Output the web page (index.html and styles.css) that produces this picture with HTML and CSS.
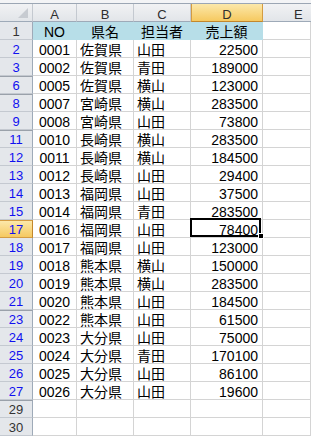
FILE: index.html
```html
<!DOCTYPE html>
<html lang="ja">
<head>
  <meta charset="UTF-8" />
  <title>売上一覧</title>
  <link rel="stylesheet" href="styles.css">
</head>
<body>
  <div class="topbar"></div>

  <div class="sheet">
    <div class="row head">
      <div class="corner"></div>
      <div class="colh">A</div>
      <div class="colh">B</div>
      <div class="colh">C</div>
      <div class="colh active">D</div>
      <div class="colh last">E</div>
    </div>

    <div class="row title">
      <div class="rh plain">1</div>
      <div class="c ctr fill">NO</div>
      <div class="c ctr fill">県名</div>
      <div class="c ctr fill">担当者</div>
      <div class="c ctr fill">売上額</div>
      <div class="c"></div>
    </div>

    <div class="row"><div class="rh">2</div><div class="c ctr">0001</div><div class="c">佐賀県</div><div class="c">山田</div><div class="c num">22500</div><div class="c"></div></div>
    <div class="row"><div class="rh">3</div><div class="c ctr">0002</div><div class="c">佐賀県</div><div class="c">青田</div><div class="c num">189000</div><div class="c"></div></div>
    <div class="row"><div class="rh gap">6</div><div class="c ctr">0005</div><div class="c">佐賀県</div><div class="c">横山</div><div class="c num">123000</div><div class="c"></div></div>
    <div class="row"><div class="rh gap">8</div><div class="c ctr">0007</div><div class="c">宮崎県</div><div class="c">横山</div><div class="c num">283500</div><div class="c"></div></div>
    <div class="row"><div class="rh">9</div><div class="c ctr">0008</div><div class="c">宮崎県</div><div class="c">山田</div><div class="c num">73800</div><div class="c"></div></div>
    <div class="row"><div class="rh gap">11</div><div class="c ctr">0010</div><div class="c">長崎県</div><div class="c">横山</div><div class="c num">283500</div><div class="c"></div></div>
    <div class="row"><div class="rh">12</div><div class="c ctr">0011</div><div class="c">長崎県</div><div class="c">横山</div><div class="c num">184500</div><div class="c"></div></div>
    <div class="row"><div class="rh">13</div><div class="c ctr">0012</div><div class="c">長崎県</div><div class="c">山田</div><div class="c num">29400</div><div class="c"></div></div>
    <div class="row"><div class="rh">14</div><div class="c ctr">0013</div><div class="c">福岡県</div><div class="c">山田</div><div class="c num">37500</div><div class="c"></div></div>
    <div class="row"><div class="rh">15</div><div class="c ctr">0014</div><div class="c">福岡県</div><div class="c">青田</div><div class="c num">283500</div><div class="c"></div></div>
    <div class="row"><div class="rh gap active">17</div><div class="c ctr">0016</div><div class="c">福岡県</div><div class="c">山田</div><div class="c num selected">78400</div><div class="c"></div></div>
    <div class="row"><div class="rh">18</div><div class="c ctr">0017</div><div class="c">福岡県</div><div class="c">山田</div><div class="c num">123000</div><div class="c"></div></div>
    <div class="row"><div class="rh">19</div><div class="c ctr">0018</div><div class="c">熊本県</div><div class="c">横山</div><div class="c num">150000</div><div class="c"></div></div>
    <div class="row"><div class="rh">20</div><div class="c ctr">0019</div><div class="c">熊本県</div><div class="c">横山</div><div class="c num">283500</div><div class="c"></div></div>
    <div class="row"><div class="rh">21</div><div class="c ctr">0020</div><div class="c">熊本県</div><div class="c">山田</div><div class="c num">184500</div><div class="c"></div></div>
    <div class="row"><div class="rh gap">23</div><div class="c ctr">0022</div><div class="c">熊本県</div><div class="c">山田</div><div class="c num">61500</div><div class="c"></div></div>
    <div class="row"><div class="rh">24</div><div class="c ctr">0023</div><div class="c">大分県</div><div class="c">山田</div><div class="c num">75000</div><div class="c"></div></div>
    <div class="row"><div class="rh">25</div><div class="c ctr">0024</div><div class="c">大分県</div><div class="c">青田</div><div class="c num">170100</div><div class="c"></div></div>
    <div class="row"><div class="rh">26</div><div class="c ctr">0025</div><div class="c">大分県</div><div class="c">山田</div><div class="c num">86100</div><div class="c"></div></div>
    <div class="row"><div class="rh">27</div><div class="c ctr">0026</div><div class="c">大分県</div><div class="c">山田</div><div class="c num">19600</div><div class="c"></div></div>

    <div class="row"><div class="rh gap plain">29</div><div class="c"></div><div class="c"></div><div class="c"></div><div class="c"></div><div class="c"></div></div>
    <div class="row"><div class="rh plain">30</div><div class="c"></div><div class="c"></div><div class="c"></div><div class="c"></div><div class="c"></div></div>
  </div>
</body>
</html>
```

FILE: styles.css
```css
html, body {
  overflow: hidden;
}

body {
  margin: 0;
  background-color: #fff;
  font-family: "Liberation Sans", "Noto Sans CJK JP", sans-serif;
  color: #000;
}

.topbar {
  height: 3px;
  background-color: #f3f4f6;
  border-bottom: 1px solid #9ba6b4;
}

.row {
  display: grid;
  grid-template-columns: 33px 44px 57px 57px 72px 1fr;
  height: 18px;
}

.row > div {
  box-sizing: border-box;
  white-space: nowrap;
}

/* column headers */
.corner, .colh {
  background: linear-gradient(#f1f2f4, #e2e5e9);
  border-right: 1px solid #c4c9d0;
  border-bottom: 1px solid #9eaab8;
}

.corner {
  position: relative;
}

.corner:after {
  content: "";
  position: absolute;
  right: 4px;
  bottom: 3px;
  border-left: 10px solid transparent;
  border-bottom: 10px solid #c7cbd1;
}

.colh {
  text-align: center;
  font-size: 13px;
  padding-top: 4px;
  line-height: 13px;
  color: #2e2e2e;
}

/* E is only partly on screen, keep its letter where the full column centres it */
.colh.last {
  text-align: left;
  padding-left: 31px;
  border-right: 0;
}

.colh.active {
  background: linear-gradient(#fce8aa, #f6c960);
  border-right-color: #d49c42;
  border-left: 1px solid #d49c42;
  border-bottom-color: #c2872d;
}

/* row headers */
.rh {
  background-color: #e4e7eb;
  border-right: 1px solid #9eaab8;
  border-bottom: 1px solid #c4c9d0;
  text-align: center;
  font-size: 13px;
  padding-top: 3px;
  line-height: 14px;
  color: #1010f0;
}

.rh.plain {
  color: #333;
}

.rh.gap {
  border-top: 1px solid #9aa1aa;
  padding-top: 2px;
}

.rh.active {
  background: linear-gradient(#fce8aa, #f6c960);
  border-right-color: #c2872d;
  border-top-color: #d49c42;
  border-bottom-color: #d49c42;
}

/* cells */
.c {
  border-right: 1px solid #d4d4d4;
  border-bottom: 1px solid #d4d4d4;
  padding: 3px 3px 0;
  font-size: 14px;
  line-height: 14px;
}

.ctr {
  text-align: center;
}

.num {
  text-align: right;
  padding-right: 4px;
}

.fill {
  background-color: #b7dee8;
  border-color: #b7dee8;
}

.selected {
  position: relative;
}

.selected:before {
  content: "";
  position: absolute;
  left: -1px;
  top: -2px;
  right: 1px;
  bottom: 0;
  border: 2px solid #000;
}

.selected:after {
  content: "";
  position: absolute;
  right: -2px;
  bottom: -2px;
  width: 4px;
  height: 4px;
  background-color: #000;
  border: 1px solid #fff;
}
```
